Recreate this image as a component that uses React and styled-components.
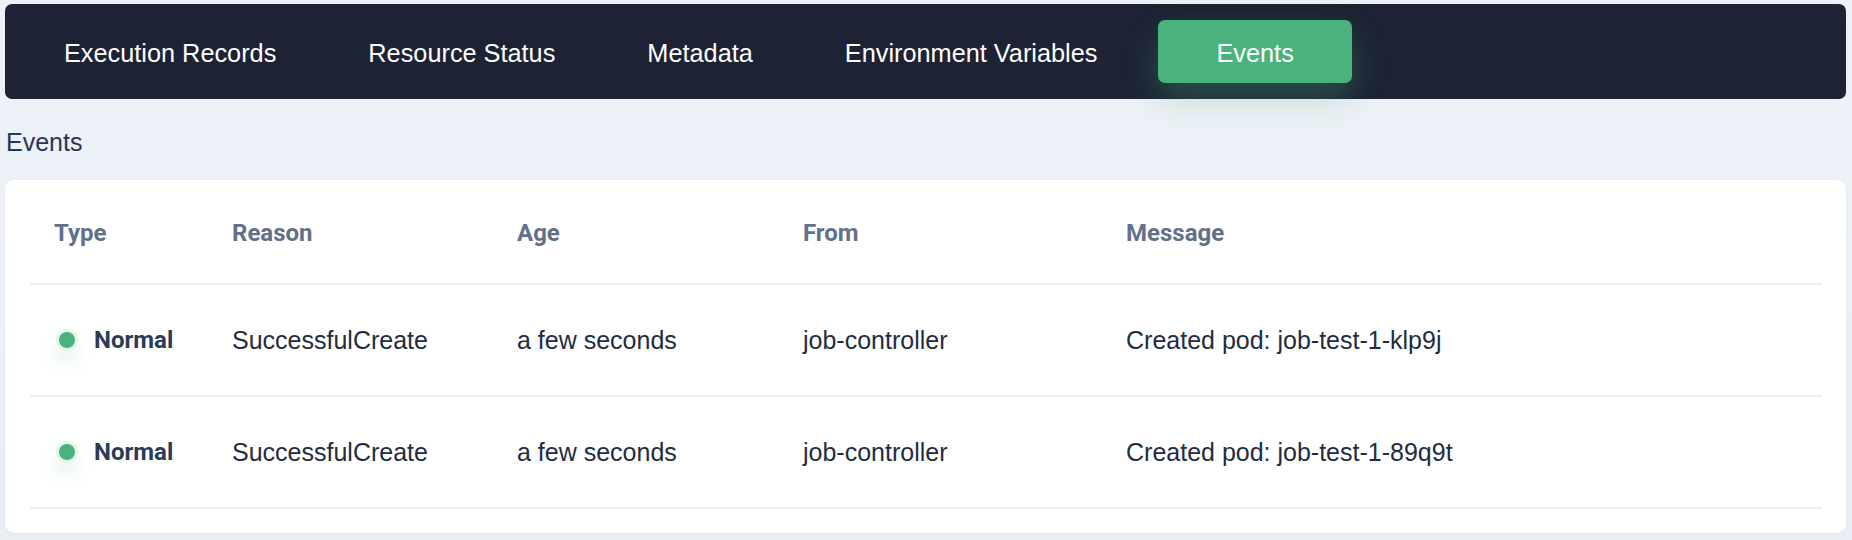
import React from "react";
import styled, { createGlobalStyle } from "styled-components";

const GlobalStyle = createGlobalStyle`
  html, body {
    margin: 0;
    padding: 0;
  }
  body {
    background: linear-gradient(180deg, #eef2f8 0%, #e9eef5 100%);
    font-family: "Liberation Sans", Arial, sans-serif;
  }
`;

const Page = styled.div`
  box-sizing: border-box;
  min-height: 540px;
  padding: 4px 6px 7px 5px;
`;

const TabBar = styled.nav`
  display: flex;
  align-items: center;
  gap: 12px;
  height: 95px;
  box-sizing: border-box;
  padding: 16px 19px;
  background: #1d2334;
  border-radius: 7px;
`;

const Tab = styled.div`
  display: flex;
  align-items: center;
  justify-content: center;
  height: 63px;
  padding: 3px ${(props) => (props.$active ? "58px" : "40px")} 0;
  margin-left: ${(props) => (props.$active ? "9px" : "0")};
  border-radius: 7px;
  color: #ffffff;
  font-size: 25.3px;
  box-sizing: border-box;
  white-space: nowrap;
  background: ${(props) => (props.$active ? "#4ab37b" : "transparent")};
  box-shadow: ${(props) =>
    props.$active ? "0 16px 32px rgba(74, 179, 123, 0.3)" : "none"};
`;

const Heading = styled.h2`
  margin: 29px 0 23px 1px;
  font-size: 25px;
  line-height: 29px;
  font-weight: 400;
  color: #2a3550;
`;

const Card = styled.div`
  background: #ffffff;
  border-radius: 9px;
  padding: 0 24px 24px 25px;
  box-shadow: 0 1px 3px rgba(30, 41, 59, 0.05);
`;

const Row = styled.div`
  display: grid;
  grid-template-columns: 178px 285px 286px 323px 1fr;
  align-items: center;
  height: ${(props) => (props.$head ? "105px" : "112px")};
  box-sizing: border-box;
  border-bottom: 2px solid #e9eef4;
`;

const HeadCell = styled.div`
  padding-left: 24px;
  padding-top: 2px;
  font-family: Roboto, "Liberation Sans", sans-serif;
  font-weight: 700;
  font-size: 24px;
  color: #62708a;
`;

const Cell = styled.div`
  padding-left: 24px;
  font-size: 25px;
  color: #232c3f;
  white-space: nowrap;
`;

const TypeCell = styled.div`
  display: flex;
  align-items: center;
  gap: 19px;
  padding-left: 29px;
`;

const Dot = styled.span`
  flex-shrink: 0;
  width: 16px;
  height: 16px;
  border-radius: 50%;
  background: #48b47b;
  box-shadow: 0 0 0 3px #e4f4eb, -2px 12px 18px rgba(72, 180, 123, 0.25);
`;

const TypeLabel = styled.span`
  font-family: Roboto, "Liberation Sans", sans-serif;
  font-weight: 700;
  font-size: 24px;
  color: #2d3a55;
`;

const tabs = [
  "Execution Records",
  "Resource Status",
  "Metadata",
  "Environment Variables",
  "Events",
];

const events = [
  {
    type: "Normal",
    reason: "SuccessfulCreate",
    age: "a few seconds",
    from: "job-controller",
    message: "Created pod: job-test-1-klp9j",
  },
  {
    type: "Normal",
    reason: "SuccessfulCreate",
    age: "a few seconds",
    from: "job-controller",
    message: "Created pod: job-test-1-89q9t",
  },
];

const App = () => {
  return (
    <Page>
      <GlobalStyle />
      <TabBar>
        {tabs.map((tab) => (
          <Tab key={tab} $active={tab === "Events"}>
            {tab}
          </Tab>
        ))}
      </TabBar>
      <Heading>Events</Heading>
      <Card>
        <Row $head>
          <HeadCell>Type</HeadCell>
          <HeadCell>Reason</HeadCell>
          <HeadCell>Age</HeadCell>
          <HeadCell>From</HeadCell>
          <HeadCell>Message</HeadCell>
        </Row>
        {events.map((item) => (
          <Row key={item.message}>
            <TypeCell>
              <Dot />
              <TypeLabel>{item.type}</TypeLabel>
            </TypeCell>
            <Cell>{item.reason}</Cell>
            <Cell>{item.age}</Cell>
            <Cell>{item.from}</Cell>
            <Cell>{item.message}</Cell>
          </Row>
        ))}
      </Card>
    </Page>
  );
};

export default App;
